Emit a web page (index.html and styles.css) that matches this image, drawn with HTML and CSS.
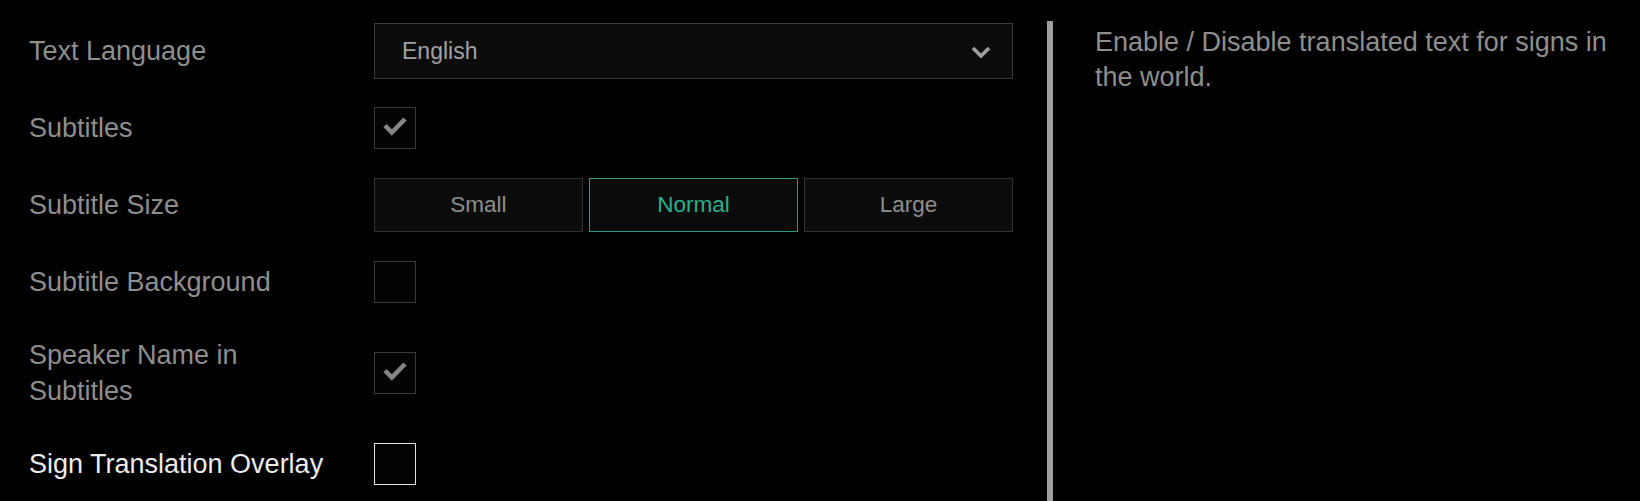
FILE: index.html
```html
<!DOCTYPE html>
<html lang="en">
	<head>
		<meta charset="utf-8">
		<meta name="viewport" content="width=device-width,initial-scale=1">
		<title>Settings - Language</title>
		<link rel="stylesheet" href="styles.css">
	</head>

	<body>
		<main class="settings-page">
			<div class="settings-list">
				<div class="setting-label">Text Language</div>
				<div class="select">
					<span class="select__value">English</span>
					<svg class="select__chevron" width="20" height="13" viewBox="0 0 20 13" aria-hidden="true">
						<polyline points="2,2 10,10 18,2" fill="none" stroke="currentColor" stroke-width="3.6" />
					</svg>
				</div>

				<div class="setting-label">Subtitles</div>
				<div class="checkbox is-checked" role="checkbox" aria-checked="true">
					<svg viewBox="0 0 40 40" aria-hidden="true">
						<polyline points="10,17.5 16.8,24.5 30,11" fill="none" stroke="currentColor" stroke-width="4.6" />
					</svg>
				</div>

				<div class="setting-label">Subtitle Size</div>
				<div class="segmented">
					<button class="segmented__option">Small</button>
					<button class="segmented__option is-selected">Normal</button>
					<button class="segmented__option">Large</button>
				</div>

				<div class="setting-label">Subtitle Background</div>
				<div class="checkbox" role="checkbox" aria-checked="false"></div>

				<div class="setting-label setting-label--multi">Speaker Name in<br>Subtitles</div>
				<div class="checkbox is-checked" role="checkbox" aria-checked="true">
					<svg viewBox="0 0 40 40" aria-hidden="true">
						<polyline points="10,17.5 16.8,24.5 30,11" fill="none" stroke="currentColor" stroke-width="4.6" />
					</svg>
				</div>

				<div class="setting-label is-focused">Sign Translation Overlay</div>
				<div class="checkbox is-focused" role="checkbox" aria-checked="false"></div>
			</div>

			<div class="scroll-rail" aria-hidden="true"></div>

			<p class="setting-description">Enable / Disable translated text for signs in the world.</p>
		</main>
	</body>
</html>
```

FILE: styles.css
```css
/* PAGE */
* {
	box-sizing: border-box;
}
html,
body {
	height: 100%;
}
body {
	background-color: #000;
	color: #8e8e8e;
	font-family: 'Liberation Sans', Arial, sans-serif;
	margin: 0;
	overflow: hidden;
}
button {
	background: none;
	border: none;
	color: inherit;
	cursor: pointer;
	font-family: inherit;
	padding: 0;
}

.settings-page {
	display: flex;
	height: 100vh;
	padding-inline-start: 29px;
}

/* SETTINGS LIST */
.settings-list {
	align-content: start;
	align-items: center;
	column-gap: 45px;
	display: grid;
	grid-template-columns: 300px 639px;
	padding-block-start: 23px;
	row-gap: 28px;
}

.setting-label {
	font-size: 27px;
	line-height: 36px;

	&.setting-label--multi {
		padding-block: 6px;
	}

	&.is-focused {
		color: #ececec;
	}
}

/* Dropdown */
.select {
	align-items: center;
	background-color: #0c0c0c;
	border: 1px solid #3a3a3a;
	color: #a2a2a2;
	display: flex;
	font-size: 23px;
	height: 56px;
	justify-content: space-between;
	padding-inline: 27px 21px;
}
.select__chevron {
	color: #a0a0a0;
	margin-block-start: 2px;
}

/* Checkbox */
.checkbox {
	background-color: #030303;
	border: 1px solid #3a3a3a;
	color: #858585;
	height: 42px;
	width: 42px;

	svg {
		display: block;
		height: 40px;
		width: 40px;
	}

	&.is-focused {
		border-color: #e2e2e2;
	}
}

/* Segmented control */
.segmented {
	column-gap: 6px;
	display: grid;
	grid-template-columns: repeat(3, 1fr);
	margin-block: 1px;
}
.segmented__option {
	background-color: #0c0c0c;
	border: 1px solid #333;
	color: #8e8e8e;
	font-size: 22.5px;
	height: 54px;

	&.is-selected {
		border-color: #2a9d80;
		color: #2bb08d;
	}
}

/* Divider / scroll rail */
.scroll-rail {
	background-color: #a0a0a0;
	flex: none;
	margin-block-start: 21px;
	margin-inline-start: 34px;
	width: 6px;
}

/* Description */
.setting-description {
	font-size: 27px;
	line-height: 35px;
	margin: 0;
	margin-inline-start: 42px;
	padding-block-start: 25px;
	width: 530px;
}
```
